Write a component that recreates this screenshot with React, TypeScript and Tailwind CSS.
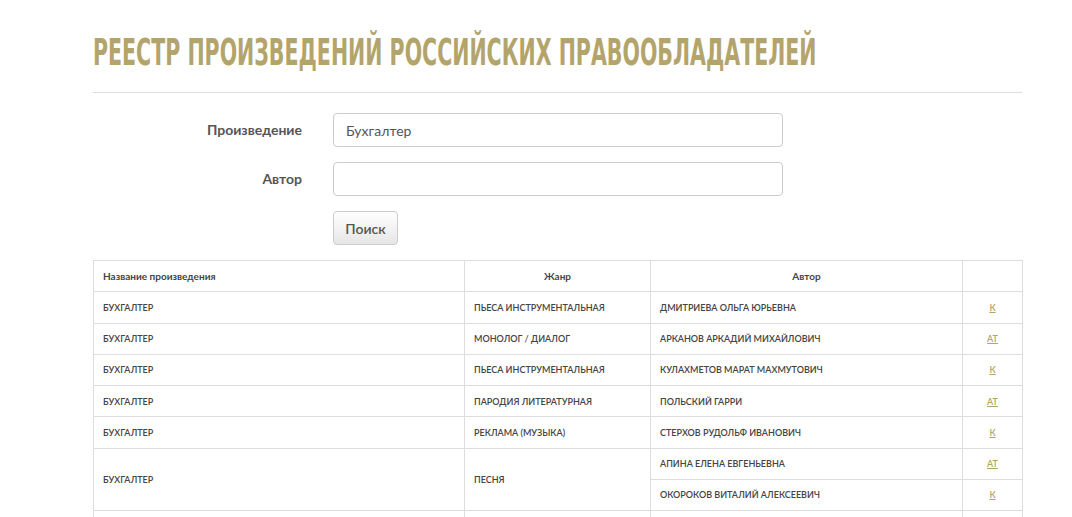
import React from 'react';

type Row = { title: string; genre: string; authors: { name: string; code: string }[] };

const ROWS: Row[] = [
  { title: 'БУХГАЛТЕР', genre: 'ПЬЕСА ИНСТРУМЕНТАЛЬНАЯ', authors: [{ name: 'ДМИТРИЕВА ОЛЬГА ЮРЬЕВНА', code: 'К' }] },
  { title: 'БУХГАЛТЕР', genre: 'МОНОЛОГ / ДИАЛОГ', authors: [{ name: 'АРКАНОВ АРКАДИЙ МИХАЙЛОВИЧ', code: 'АТ' }] },
  { title: 'БУХГАЛТЕР', genre: 'ПЬЕСА ИНСТРУМЕНТАЛЬНАЯ', authors: [{ name: 'КУЛАХМЕТОВ МАРАТ МАХМУТОВИЧ', code: 'К' }] },
  { title: 'БУХГАЛТЕР', genre: 'ПАРОДИЯ ЛИТЕРАТУРНАЯ', authors: [{ name: 'ПОЛЬСКИЙ ГАРРИ', code: 'АТ' }] },
  { title: 'БУХГАЛТЕР', genre: 'РЕКЛАМА (МУЗЫКА)', authors: [{ name: 'СТЕРХОВ РУДОЛЬФ ИВАНОВИЧ', code: 'К' }] },
  {
    title: 'БУХГАЛТЕР',
    genre: 'ПЕСНЯ',
    authors: [
      { name: 'АПИНА ЕЛЕНА ЕВГЕНЬЕВНА', code: 'АТ' },
      { name: 'ОКОРОКОВ ВИТАЛИЙ АЛЕКСЕЕВИЧ', code: 'К' },
    ],
  },
  { title: 'БУХГАЛТЕР', genre: 'ПЕСНЯ', authors: [{ name: 'ИВАНОВ ИВАН', code: 'К' }] },
];

const cell = 'border border-[#dddddd] px-[9px] h-[31.3px] align-middle';

export default function App() {
  return (
    <div className="min-h-screen bg-white font-['Lato','Open_Sans',sans-serif] text-[#444]">
      <div className="w-[929px] ml-[93px]">
        <div className="pt-[32px] pb-[18px]">
          <h1 className="whitespace-nowrap origin-left scale-x-[0.617] font-['DejaVu_Sans_Condensed','DejaVu_Sans',sans-serif] font-bold text-[37px] leading-[42px] text-[#b3a46c]">
            РЕЕСТР ПРОИЗВЕДЕНИЙ РОССИЙСКИХ ПРАВООБЛАДАТЕЛЕЙ
          </h1>
        </div>
        <div className="border-t border-[#dddddd]" />

        <form className="pt-[20px] flex flex-col gap-[15px]" onSubmit={(e) => e.preventDefault()}>
          <div className="flex items-center">
            <label className="w-[209px] text-right text-[14px] leading-[30px] font-bold text-[#555]">Произведение</label>
            <input
              defaultValue="Бухгалтер"
              className="ml-[31px] w-[450px] h-[34px] border border-[#cccccc] rounded-[4px] px-[12px] text-[14px] text-[#555] outline-none"
            />
          </div>
          <div className="flex items-center">
            <label className="w-[209px] text-right text-[14px] leading-[30px] font-bold text-[#555]">Автор</label>
            <input className="ml-[31px] w-[450px] h-[34px] border border-[#cccccc] rounded-[4px] px-[12px] text-[14px] text-[#555] outline-none" />
          </div>
          <div className="flex">
            <button
              type="submit"
              className="ml-[240px] w-[65px] h-[34px] border border-[#cccccc] rounded-[4px] bg-gradient-to-b from-white to-[#e6e6e6] text-[14px] font-semibold text-[#555]"
            >
              Поиск
            </button>
          </div>
        </form>

        <table className="mt-[15px] w-[929px] border-collapse table-fixed text-[9px] font-semibold text-[#444]">
          <colgroup>
            <col className="w-[371px]" />
            <col className="w-[186px]" />
            <col className="w-[312px]" />
            <col className="w-[60px]" />
          </colgroup>
          <thead>
            <tr className="text-[10px]">
              <th className={`${cell} text-left font-bold`}>Название произведения</th>
              <th className={`${cell} text-center font-bold`}>Жанр</th>
              <th className={`${cell} text-center font-bold`}>Автор</th>
              <th className={cell}></th>
            </tr>
          </thead>
          <tbody>
            {ROWS.map((row, i) =>
              row.authors.map((a, j) => (
                <tr key={`${i}-${j}`}>
                  {j === 0 && (
                    <>
                      <td rowSpan={row.authors.length} className={cell}>{row.title}</td>
                      <td rowSpan={row.authors.length} className={cell}>{row.genre}</td>
                    </>
                  )}
                  <td className={cell}>{a.name}</td>
                  <td className={`${cell} text-center`}>
                    <a href="#" className="text-[#b3a46c] underline">{a.code}</a>
                  </td>
                </tr>
              ))
            )}
          </tbody>
        </table>
      </div>
    </div>
  );
}
